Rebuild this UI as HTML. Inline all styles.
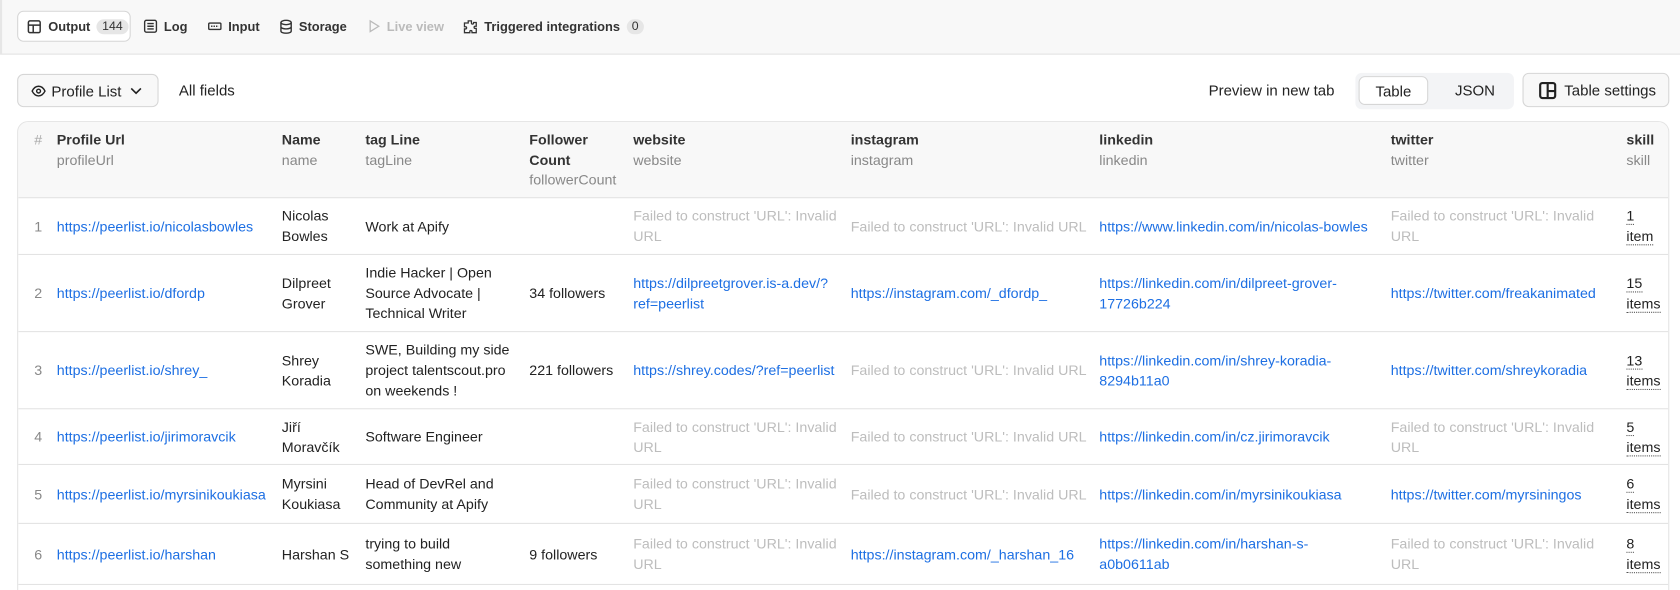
<!DOCTYPE html>
<html><head><meta charset="utf-8">
<style>
*{box-sizing:border-box;margin:0;padding:0}
html,body{width:1680px;height:590px;overflow:hidden;background:#fff}
#w{position:absolute;left:0;top:0;width:1568px;height:551px;overflow:hidden;transform:scale(1.07143);transform-origin:0 0;font-family:"Liberation Sans",sans-serif;font-size:13.3px;color:#222}
.top{position:absolute;left:0;top:0;width:1568px;height:51px;background:#f8f8f8;border-bottom:1px solid #e3e3e3;border-left:2px solid #e6e6e6}
.tab{position:absolute;top:10px;height:29px;display:flex;align-items:center;font-size:12px;font-weight:bold;color:#333}
.tab svg{margin-right:6px}
.badge{background:#e6e6e6;border-radius:9px;padding:1px 5px;font-weight:normal;margin-left:6px;font-size:11.5px}
.btn{position:absolute;border:1px solid #d6d6d6;border-radius:6px;background:#f8f8f8;display:flex;align-items:center;font-size:14px;color:#222}
.tbl{position:absolute;left:16px;top:113px;width:1542px;height:600px;border:1px solid #e3e3e3;border-radius:10px;overflow:hidden}
.hd{position:absolute;left:0;top:0;width:100%;height:71px;background:#f8f8f8;border-bottom:1px solid #e3e3e3}
.row{position:absolute;left:0;width:100%;border-bottom:1px solid #e3e3e3}
.c{position:absolute;top:0;bottom:0;display:flex;align-items:center;line-height:19px}
.h{position:absolute;top:8px;line-height:18.5px;font-weight:bold;color:#333}
.h span{display:block;font-weight:normal;color:#888}
a{color:#1d6fe3;text-decoration:none}
.f{color:#bdbdbd}
.n{color:#888}
.sk{display:block}
.sk u{text-decoration:none;border-bottom:1px dotted #555}
</style></head><body><div id="w">
<div class="top"></div>
<div class="tab" style="left:16px;width:106px;border:1px solid #d6d6d6;border-radius:6px;background:#fff;padding-left:8px">
<svg width="14" height="14" viewBox="0 0 14 14" fill="none" stroke="#333" stroke-width="1.4"><rect x="1.5" y="1.5" width="11" height="11" rx="1.5"/><path d="M1.5 5.5h11M6 5.5v7"/></svg>Output<span class="badge">144</span></div>
<div class="tab" style="left:134px"><svg width="13" height="13" viewBox="0 0 13 13" fill="none" stroke="#333" stroke-width="1.3"><rect x="1" y="1" width="11" height="11" rx="1.5"/><path d="M3.5 4h6M3.5 6.5h6M3.5 9h6"/></svg>Log</div>
<div class="tab" style="left:194px"><svg width="13" height="13" viewBox="0 0 13 13" fill="none" stroke="#333" stroke-width="1.3"><rect x="0.8" y="3.5" width="11.4" height="6" rx="1"/><path d="M3 6.5h7" stroke-dasharray="1.3 1"/></svg>Input</div>
<div class="tab" style="left:261px"><svg width="12" height="14" viewBox="0 0 12 14" fill="none" stroke="#333" stroke-width="1.3"><ellipse cx="6" cy="3" rx="4.8" ry="2"/><path d="M1.2 3v8c0 1.1 2.1 2 4.8 2s4.8-.9 4.8-2V3M1.2 7c0 1.1 2.1 2 4.8 2s4.8-.9 4.8-2"/></svg>Storage</div>
<div class="tab" style="left:344px;color:#bbb"><svg width="11" height="13" viewBox="0 0 11 13" fill="none" stroke="#bbb" stroke-width="1.2"><path d="M1.5 1.5l8 5-8 5z"/></svg>Live view</div>
<div class="tab" style="left:432px"><svg width="14" height="14" viewBox="0 0 14 14" fill="none" stroke="#333" stroke-width="1.2"><path d="M5 1.5h3v2a1 1 0 002 0v-.5h2.5v3.5h-1a1 1 0 000 2h1v4h-4v-1a1 1 0 00-2 0v1H1.5V9h1a1 1 0 000-2h-1V3.5H5z"/></svg>Triggered integrations<span class="badge">0</span></div>

<div class="btn" style="left:16px;top:69px;width:132px;height:31px;padding-left:12px"><svg width="14" height="12" viewBox="0 0 14 12" fill="none" stroke="#222" stroke-width="1.3" style="margin-right:5px"><path d="M1 6c1.5-3 3.5-4.5 6-4.5S11.5 3 13 6c-1.5 3-3.5 4.5-6 4.5S2.5 9 1 6z"/><circle cx="7" cy="6" r="1.8"/></svg>Profile List<svg width="12" height="8" viewBox="0 0 12 8" fill="none" stroke="#222" stroke-width="1.5" style="margin-left:8px"><path d="M1.5 1.5l4.5 4.5 4.5-4.5"/></svg></div>
<div style="position:absolute;left:167px;top:76px;font-size:14px">All fields</div>
<div style="position:absolute;left:1128px;top:76px;font-size:14px">Preview in new tab</div>
<div style="position:absolute;left:1265px;top:68px;width:148px;height:34px;background:#f3f4f6;border-radius:6px"></div>
<div class="btn" style="left:1268px;top:71px;width:65px;height:27px;background:#fff;justify-content:center">Table</div>
<div style="position:absolute;left:1358px;top:76px;font-size:14px">JSON</div>
<div class="btn" style="left:1421px;top:68px;width:137px;height:32px;padding-left:14px"><svg width="17" height="17" viewBox="0 0 17 17" fill="none" stroke="#222" stroke-width="2" style="margin-right:7px"><rect x="1.5" y="1.5" width="14" height="14" rx="2"/><path d="M8.5 1.5v14M8.5 9h7"/></svg>Table settings</div>

<div class="tbl">
<div class="hd">
<div class="h" style="left:15px;color:#aaa;font-weight:normal">#</div>
<div class="h" style="left:36px">Profile Url<span>profileUrl</span></div>
<div class="h" style="left:246px">Name<span>name</span></div>
<div class="h" style="left:324px">tag Line<span>tagLine</span></div>
<div class="h" style="left:477px">Follower<br>Count<span>followerCount</span></div>
<div class="h" style="left:574px">website<span>website</span></div>
<div class="h" style="left:777px">instagram<span>instagram</span></div>
<div class="h" style="left:1009px">linkedin<span>linkedin</span></div>
<div class="h" style="left:1281px">twitter<span>twitter</span></div>
<div class="h" style="left:1501px">skill<span>skill</span></div>
</div>

<div class="row" style="top:71px;height:53px">
<div class="c n" style="left:15px">1</div><div class="c" style="left:36px"><a>https://peerlist.io/nicolasbowles</a></div>
<div class="c" style="left:246px;width:70px">Nicolas Bowles</div><div class="c" style="left:324px;width:132px">Work at Apify</div><div class="c" style="left:477px"></div>
<div class="c f" style="left:574px;width:195px">Failed to construct 'URL': Invalid URL</div>
<div class="c f" style="left:777px;width:225px">Failed to construct 'URL': Invalid URL</div>
<div class="c" style="left:1009px"><a>https://www.linkedin.com/in/nicolas-bowles</a></div>
<div class="c f" style="left:1281px;width:195px">Failed to construct 'URL': Invalid URL</div>
<div class="c" style="left:1501px"><span class="sk"><u>1</u><br><u>item</u></span></div>
</div>

<div class="row" style="top:124px;height:72px">
<div class="c n" style="left:15px">2</div><div class="c" style="left:36px"><a>https://peerlist.io/dfordp</a></div>
<div class="c" style="left:246px;width:70px">Dilpreet Grover</div><div class="c" style="left:324px;width:132px">Indie Hacker | Open Source Advocate | Technical Writer</div><div class="c" style="left:477px">34 followers</div>
<div class="c" style="left:574px;width:195px"><a>https://dilpreetgrover.is-a.dev/?ref=peerlist</a></div>
<div class="c" style="left:777px"><a>https://instagram.com/_dfordp_</a></div>
<div class="c" style="left:1009px;width:240px"><a>https://linkedin.com/in/dilpreet-grover-17726b224</a></div>
<div class="c" style="left:1281px"><a>https://twitter.com/freakanimated</a></div>
<div class="c" style="left:1501px"><span class="sk"><u>15</u><br><u>items</u></span></div>
</div>

<div class="row" style="top:196px;height:72px">
<div class="c n" style="left:15px">3</div><div class="c" style="left:36px"><a>https://peerlist.io/shrey_</a></div>
<div class="c" style="left:246px;width:70px">Shrey Koradia</div><div class="c" style="left:324px;width:136px">SWE, Building my side project talentscout.pro on weekends !</div><div class="c" style="left:477px">221 followers</div>
<div class="c" style="left:574px"><a>https://shrey.codes/?ref=peerlist</a></div>
<div class="c f" style="left:777px;width:225px">Failed to construct 'URL': Invalid URL</div>
<div class="c" style="left:1009px;width:240px"><a>https://linkedin.com/in/shrey-koradia-8294b11a0</a></div>
<div class="c" style="left:1281px"><a>https://twitter.com/shreykoradia</a></div>
<div class="c" style="left:1501px"><span class="sk"><u>13</u><br><u>items</u></span></div>
</div>

<div class="row" style="top:268px;height:52px">
<div class="c n" style="left:15px">4</div><div class="c" style="left:36px"><a>https://peerlist.io/jirimoravcik</a></div>
<div class="c" style="left:246px;width:70px">Jiří Moravčík</div><div class="c" style="left:324px;width:132px">Software Engineer</div>
<div class="c f" style="left:574px;width:195px">Failed to construct 'URL': Invalid URL</div>
<div class="c f" style="left:777px;width:225px">Failed to construct 'URL': Invalid URL</div>
<div class="c" style="left:1009px"><a>https://linkedin.com/in/cz.jirimoravcik</a></div>
<div class="c f" style="left:1281px;width:195px">Failed to construct 'URL': Invalid URL</div>
<div class="c" style="left:1501px"><span class="sk"><u>5</u><br><u>items</u></span></div>
</div>

<div class="row" style="top:320px;height:55px">
<div class="c n" style="left:15px">5</div><div class="c" style="left:36px"><a>https://peerlist.io/myrsinikoukiasa</a></div>
<div class="c" style="left:246px;width:70px">Myrsini Koukiasa</div><div class="c" style="left:324px;width:132px">Head of DevRel and Community at Apify</div>
<div class="c f" style="left:574px;width:195px">Failed to construct 'URL': Invalid URL</div>
<div class="c f" style="left:777px;width:225px">Failed to construct 'URL': Invalid URL</div>
<div class="c" style="left:1009px"><a>https://linkedin.com/in/myrsinikoukiasa</a></div>
<div class="c" style="left:1281px"><a>https://twitter.com/myrsiningos</a></div>
<div class="c" style="left:1501px"><span class="sk"><u>6</u><br><u>items</u></span></div>
</div>

<div class="row" style="top:375px;height:57px">
<div class="c n" style="left:15px">6</div><div class="c" style="left:36px"><a>https://peerlist.io/harshan</a></div>
<div class="c" style="left:246px;width:70px">Harshan S</div><div class="c" style="left:324px;width:125px">trying to build something new</div><div class="c" style="left:477px">9 followers</div>
<div class="c f" style="left:574px;width:195px">Failed to construct 'URL': Invalid URL</div>
<div class="c" style="left:777px"><a>https://instagram.com/_harshan_16</a></div>
<div class="c" style="left:1009px;width:240px"><a>https://linkedin.com/in/harshan-s-a0b0611ab</a></div>
<div class="c f" style="left:1281px;width:195px">Failed to construct 'URL': Invalid URL</div>
<div class="c" style="left:1501px"><span class="sk"><u>8</u><br><u>items</u></span></div>
</div>
</div>
</div></body></html>
